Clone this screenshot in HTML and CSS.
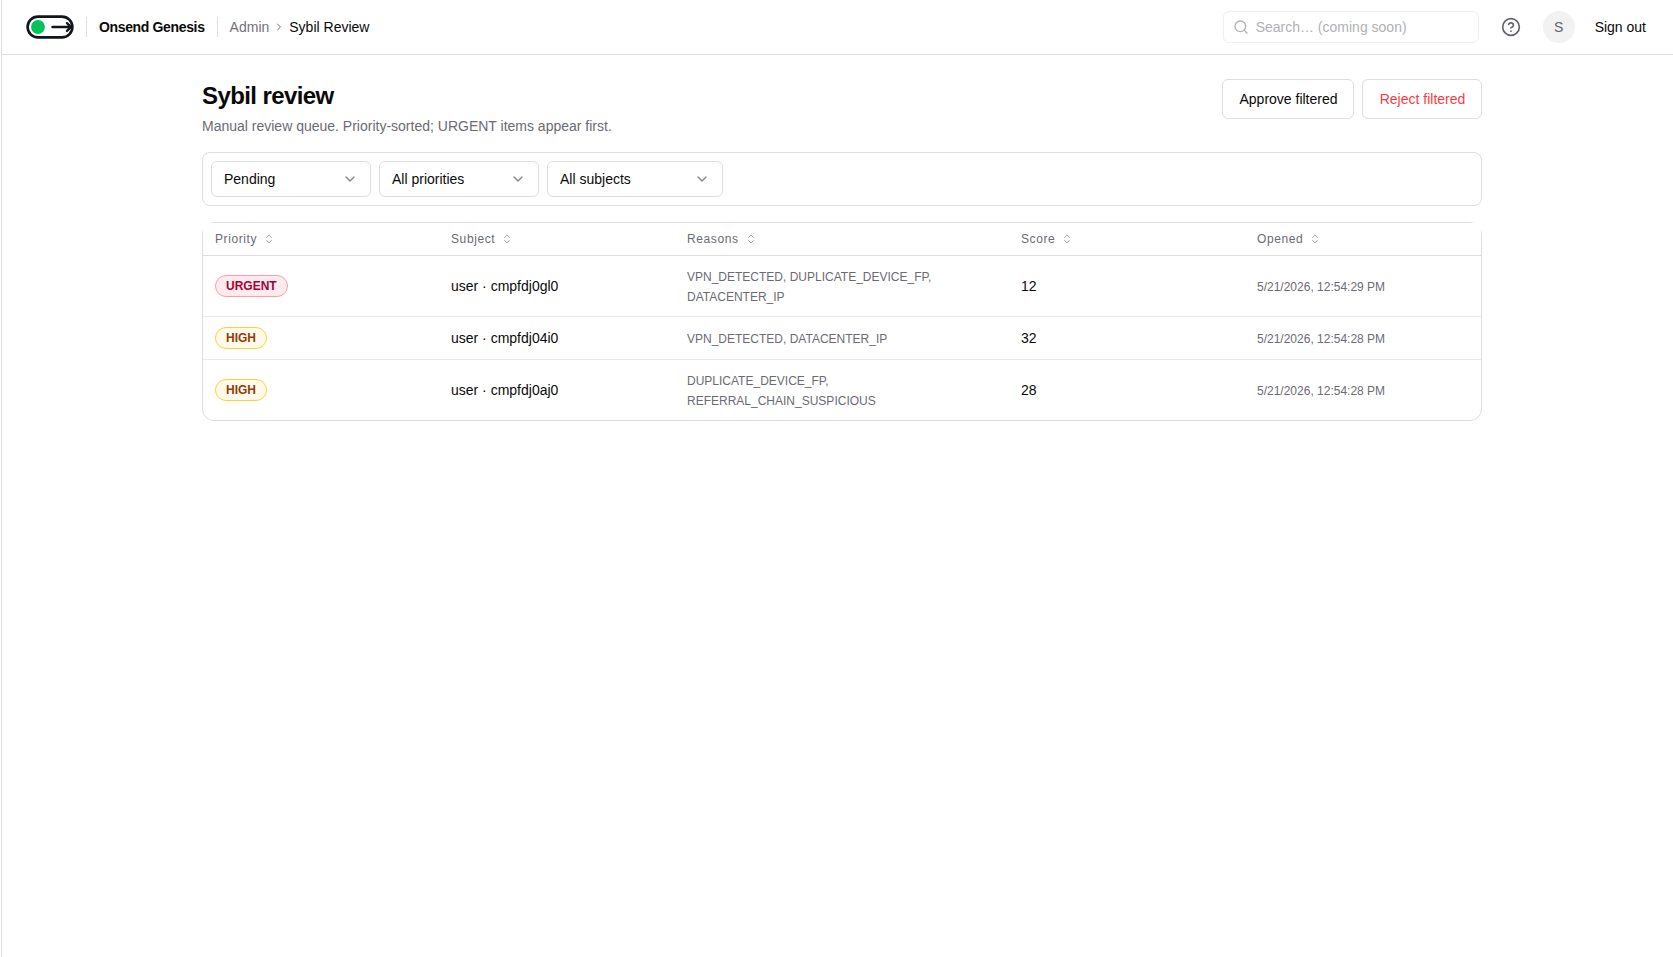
FILE: index.html
```html
<!DOCTYPE html>
<html lang="en">

<head>
    <meta charset="utf-8">
    <title>Sybil Review</title>
    <link rel="stylesheet" href="styles.css">
</head>

<body>
    <svg class="sprite" width="0" height="0">
        <symbol id="chevron" viewBox="0 0 24 24">
            <path d="m6 9 6 6 6-6" />
        </symbol>
        <symbol id="sort" viewBox="0 0 24 24">
            <path d="m7 15 5 5 5-5" />
            <path d="m7 9 5-5 5 5" />
        </symbol>
    </svg>
    <div class="app">
        <header class="topbar">
            <svg class="logo" width="48" height="24" viewBox="0 0 48 24">
                <rect x="1.600" y="1.600" width="44.800" height="20.800" rx="10.400" fill="#fff" stroke="#11151c" stroke-width="2.600" />
                <circle cx="12" cy="12" r="6.900" fill="#00c35a" />
                <path d="M26.500 12h18M41 8.200 45 12l-4 3.800" fill="none" stroke="#11151c" stroke-width="2.400" stroke-linecap="round" stroke-linejoin="round" />
            </svg>
            <span class="divider"></span>
            <span class="brand">Onsend Genesis</span>
            <span class="divider"></span>
            <nav class="crumbs">
                <a>Admin</a>
                <svg class="icon" width="12" height="12" viewBox="0 0 24 24">
                    <path d="m9 18 6-6-6-6" />
                </svg>
                <span class="current">Sybil Review</span>
            </nav>
            <div class="search">
                <svg class="icon" width="16" height="16" viewBox="0 0 24 24">
                    <circle cx="11" cy="11" r="8" />
                    <path d="m21 21-4.300-4.300" />
                </svg>
                <span>Search… (coming soon)</span>
            </div>
            <svg class="icon help" width="20" height="20" viewBox="0 0 24 24">
                <circle cx="12" cy="12" r="10" />
                <path d="M9.090 9a3 3 0 0 1 5.830 1c0 2-3 3-3 3" />
                <path d="M12 17h.01" />
            </svg>
            <span class="avatar">S</span>
            <a class="signout">Sign out</a>
        </header>
        <main class="page">
            <div class="page-head">
                <div>
                    <h1>Sybil review</h1>
                    <p>Manual review queue. Priority-sorted; URGENT items appear first.</p>
                </div>
                <div class="actions">
                    <button class="btn">Approve filtered</button>
                    <button class="btn danger">Reject filtered</button>
                </div>
            </div>
            <div class="filters">
                <div class="select">Pending<svg class="icon" width="16" height="16"><use href="#chevron" /></svg></div>
                <div class="select">All priorities<svg class="icon" width="16" height="16"><use href="#chevron" /></svg></div>
                <div class="select wide">All subjects<svg class="icon" width="16" height="16"><use href="#chevron" /></svg></div>
            </div>
            <div class="queue">
                <div class="row head">
                    <div>Priority<svg class="icon" width="12" height="12"><use href="#sort" /></svg></div>
                    <div>Subject<svg class="icon" width="12" height="12"><use href="#sort" /></svg></div>
                    <div>Reasons<svg class="icon" width="12" height="12"><use href="#sort" /></svg></div>
                    <div>Score<svg class="icon" width="12" height="12"><use href="#sort" /></svg></div>
                    <div>Opened<svg class="icon" width="12" height="12"><use href="#sort" /></svg></div>
                </div>
                <div class="row">
                    <div><span class="badge urgent">URGENT</span></div>
                    <div>user · cmpfdj0gl0</div>
                    <div class="reasons">VPN_DETECTED, DUPLICATE_DEVICE_FP, DATACENTER_IP</div>
                    <div>12</div>
                    <div class="time">5/21/2026, 12:54:29 PM</div>
                </div>
                <div class="row">
                    <div><span class="badge high">HIGH</span></div>
                    <div>user · cmpfdj04i0</div>
                    <div class="reasons">VPN_DETECTED, DATACENTER_IP</div>
                    <div>32</div>
                    <div class="time">5/21/2026, 12:54:28 PM</div>
                </div>
                <div class="row">
                    <div><span class="badge high">HIGH</span></div>
                    <div>user · cmpfdj0aj0</div>
                    <div class="reasons">DUPLICATE_DEVICE_FP, REFERRAL_CHAIN_SUSPICIOUS</div>
                    <div>28</div>
                    <div class="time">5/21/2026, 12:54:28 PM</div>
                </div>
            </div>
        </main>
    </div>
</body>

</html>
```
FILE: styles.css
```css
* {
    box-sizing: border-box;
    margin: 0;
    padding: 0;
}

body {
    background: #fff;
    color: #0a0a0a;
    font-family: "Liberation Sans", Arial, sans-serif;
    font-size: 14px;
    line-height: 20px;
}

.sprite {
    display: block;
}

.icon {
    flex: none;
    fill: none;
    stroke: currentColor;
    stroke-width: 2;
    stroke-linecap: round;
    stroke-linejoin: round;
}

.app {
    min-height: 100vh;
    margin-left: 1px;
    border-left: 1px solid #dedee0;
}

.topbar {
    display: flex;
    align-items: center;
    height: 55px;
    padding: 0 27px 0 24px;
    border-bottom: 1px solid #dedee0;
}

.logo {
    flex: none;
}

.divider {
    width: 1px;
    height: 20px;
    margin: 0 12px;
    background: #e0e0e2;
}

.brand {
    font-weight: bold;
    letter-spacing: -0.35px;
}

.crumbs {
    display: flex;
    align-items: center;
    gap: 4px;
    color: #71717a;
}

.crumbs .current {
    color: #0a0a0a;
}

.search {
    display: flex;
    align-items: center;
    gap: 7px;
    width: 256px;
    height: 32px;
    margin-left: auto;
    padding: 0 9px;
    border: 1px solid #efeff0;
    border-radius: 6px;
    color: #b1b1b5;
}

.help {
    margin: 0 22px;
    color: #63636c;
}

.avatar {
    width: 32px;
    height: 32px;
    margin-right: 20px;
    border-radius: 50%;
    background: #f2f2f3;
    color: #63636c;
    line-height: 32px;
    text-align: center;
}

.page {
    width: 1280px;
    margin-left: 200px;
    padding-top: 24px;
}

.page-head {
    display: flex;
    justify-content: space-between;
    height: 73px;
}

.page-head h1 {
    padding-top: 1px;
    font-size: 24px;
    line-height: 32px;
    letter-spacing: -0.6px;
}

.page-head p {
    margin-top: 4px;
    color: #6b6b74;
}

.actions {
    display: flex;
    gap: 8px;
}

.btn {
    width: 132px;
    height: 40px;
    padding-left: 1px;
    background: #fff;
    border: 1px solid #dedee0;
    border-radius: 6px;
    color: #0a0a0a;
    font: inherit;
}

.btn.danger {
    width: 120px;
    color: #fb3b42;
}

.filters {
    display: flex;
    gap: 8px;
    padding: 8px;
    border: 1px solid #dedee0;
    border-radius: 8px;
}

.select {
    display: flex;
    align-items: center;
    justify-content: space-between;
    width: 160px;
    height: 36px;
    padding: 0 12px;
    border: 1px solid #dedee0;
    border-radius: 6px;
}

.select .icon {
    color: #85858a;
}

.select.wide {
    width: 176px;
}

.queue {
    margin-top: 16px;
    border: 1px solid #dedee0;
    border-radius: 12px;
}

.row {
    display: grid;
    grid-template-columns: 236px 236px 334px 236px 236px;
    align-items: center;
    padding: 10px 0;
    border-bottom: 1px solid #e9e9eb;
}

.row:last-child {
    border-bottom: none;
}

.row > div {
    padding: 0 12px;
}

.row.head {
    padding: 0;
    height: 33px;
    background: #fff;
    border-bottom-color: #dedee0;
    color: #6b6b74;
    font-size: 12px;
    line-height: 16px;
    letter-spacing: 0.6px;
}

.row.head > div {
    display: flex;
    align-items: center;
    gap: 6px;
}

.row.head .icon {
    color: #aaaaae;
}

.row .reasons,
.row .time {
    margin: 1px 0 -1px;
    color: #6b6b74;
    font-size: 12px;
}

.row .reasons {
    padding-right: 70px;
}

.badge {
    display: inline-block;
    height: 22px;
    padding: 0 10px;
    border: 1px solid;
    border-radius: 11px;
    font-size: 12px;
    font-weight: bold;
    line-height: 20px;
    vertical-align: top;
}

.badge.urgent {
    background: #ffebee;
    border-color: #ff9cab;
    color: #a50036;
}

.badge.high {
    background: #fffbe8;
    border-color: #ffcf3f;
    color: #933b0c;
}
```
